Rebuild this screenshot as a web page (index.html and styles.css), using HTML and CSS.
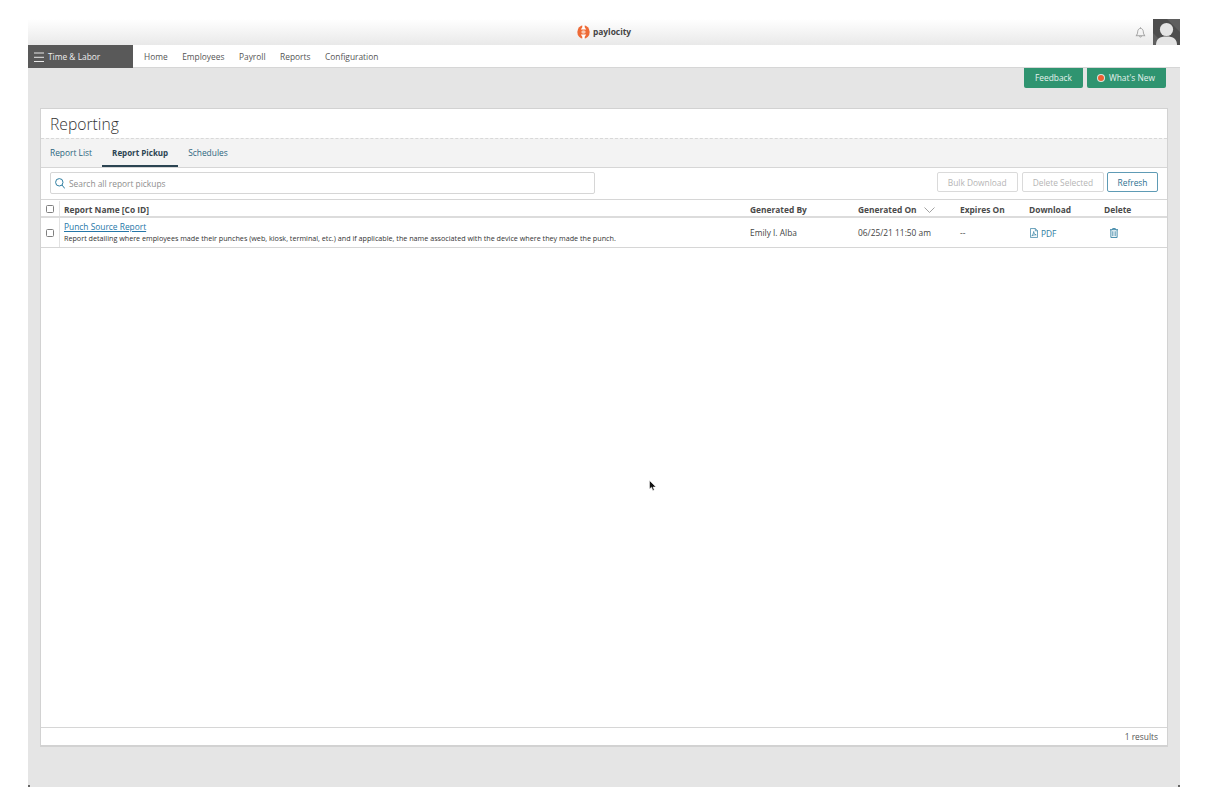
FILE: index.html
```html
<!DOCTYPE html>
<html lang="en">
<head>
<meta charset="utf-8">
<title>Reporting</title>
<link rel="stylesheet" href="styles.css">
</head>
<body>
<div class="window">
  <header class="topbar">
    <div class="logo">
      <svg class="logo-mark" width="13" height="14" viewBox="0 0 13 14"><ellipse cx="6.500" cy="7" rx="6.200" ry="6.800" fill="#ee6a36"/><path d="M5.300 0h2.400v2.200l1.500 2.300H3.800l1.500-2.300zM3.800 9.500h5.400l-1.500 2.300V14H5.300v-2.200z" fill="#fff"/><ellipse cx="6.500" cy="7" rx="2.200" ry="1.800" fill="#f9c9b2"/></svg>
      <span>paylocity</span>
    </div>
    <svg class="bell" width="11" height="11" viewBox="0 0 12 12"><path d="M1 9.500c1.400-1 1.700-2 1.900-4.200C3.100 2.900 4.300 1.500 6 1.500s2.900 1.400 3.100 3.800C9.300 7.500 9.600 8.500 11 9.500zM6 .3v1.200M4.800 10c.2 1.300 2.200 1.300 2.400 0" fill="none" stroke="#8a8a8a" stroke-width=".8"/></svg>
    <svg class="avatar" width="27" height="26" viewBox="0 0 27 26"><rect width="27" height="26" fill="#4d4d4d"/><path d="M14 0 27 13V0zM0 14 12 26H0z" fill="#5f5f5f"/><circle cx="13.500" cy="10.500" r="6.600" fill="#e4e4e4"/><path d="M3 26c0-6 3.500-8.500 10.500-8.500S24 20 24 26z" fill="#e4e4e4"/></svg>
  </header>
  <nav class="navbar">
    <div class="module">
      <svg width="10" height="10" viewBox="0 0 10 10"><path d="M0 1h10M0 5.300h10M0 9.500h10" stroke="#e8e8e8" stroke-width="1"/></svg>
      <span>Time &amp; Labor</span>
    </div>
    <ul class="menu">
      <li>Home</li><li>Employees</li><li>Payroll</li><li>Reports</li><li>Configuration</li>
    </ul>
  </nav>
  <main class="content">
    <div class="actions">
      <button class="green-btn">Feedback</button>
      <button class="green-btn"><i class="dot"></i>What's New</button>
    </div>
    <section class="panel">
      <h1 class="title">Reporting</h1>
      <div class="tabs">
        <a class="tab">Report List</a>
        <a class="tab active">Report Pickup</a>
        <a class="tab">Schedules</a>
      </div>
      <div class="toolbar">
        <div class="search">
          <svg width="10" height="11" viewBox="0 0 10 11"><circle cx="4.300" cy="4.300" r="3.700" fill="none" stroke="#2f7ea1" stroke-width="1"/><path d="m7 7 2.800 3.500" stroke="#2f7ea1" stroke-width="1"/></svg>
          <span>Search all report pickups</span>
        </div>
        <button class="btn disabled">Bulk Download</button>
        <button class="btn disabled">Delete Selected</button>
        <button class="btn primary">Refresh</button>
      </div>
      <div class="row head">
        <div class="check"><i class="box"></i></div>
        <div class="name">Report Name [Co ID]</div>
        <div class="by">Generated By</div>
        <div class="on">Generated On
          <svg class="sort" width="11" height="6" viewBox="0 0 11 6"><path d="m.5.500 5 5 5-5" fill="none" stroke="#8a8a8a" stroke-width=".8"/></svg>
        </div>
        <div class="exp">Expires On</div>
        <div class="dl">Download</div>
        <div class="del">Delete</div>
      </div>
      <div class="row item">
        <div class="check"><i class="box"></i></div>
        <div class="name">
          <a class="report-link">Punch Source Report</a>
          <p class="desc">Report detailing where employees made their punches (web, kiosk, terminal, etc.) and if applicable, the name associated with the device where they made the punch.</p>
        </div>
        <div class="by">Emily I. Alba</div>
        <div class="on">06/25/21 11:50 am</div>
        <div class="exp">--</div>
        <div class="dl link">
          <svg width="8" height="10" viewBox="0 0 9 11"><path d="M.5.500h5.500l2.500 2.500v7.500h-8zM6 .500v2.500h2.500M2 8.800c1-.8 2-3 2.200-5 .3 2 1 3.200 2.800 3.800-1.800-.2-3.600.2-5 1.200z" fill="none" stroke="#2f7ea1" stroke-width=".8"/></svg>
          <span class="pdf">PDF</span>
        </div>
        <div class="del">
          <svg width="8" height="10" viewBox="0 0 9 11"><path d="M0 1.800h9M3 1.800V.500h3v1.300M1 1.800v8.700h7V1.800" fill="none" stroke="#2f7ea1" stroke-width="1"/><path d="M3.200 3.500v5.500M5.800 3.500v5.500" stroke="#2f7ea1" stroke-width="1"/></svg>
        </div>
      </div>
      <div class="spacer"></div>
      <footer class="results">1 results</footer>
    </section>
  </main>
  <i class="corner corner-left"></i>
  <i class="corner corner-right"></i>
  <svg class="cursor" width="8" height="12" viewBox="0 0 8 12"><path d="M.500.500v8.500l2-1.800 1.300 3.300 1.500-.6L4 7h3z" fill="#111" stroke="#fff" stroke-width=".5"/></svg>
</div>
</body>
</html>
```
FILE: styles.css
```css
* { box-sizing: border-box; }
html, body { margin: 0; height: 100%; background: #fff; }
body {
  font-family: "Open Sans", "Liberation Sans", sans-serif;
  font-size: 8.400px;
  color: #3c3c3c;
  overflow: hidden;
}
.window {
  position: relative;
  width: 1152px;
  height: 768px;
  margin: 19px 28px 0;
  display: flex;
  flex-direction: column;
}
.topbar {
  height: 26px;
  background: linear-gradient(#fff, #e9e9e9);
  display: flex;
  align-items: center;
  justify-content: flex-end;
  position: relative;
}
.logo {
  position: absolute;
  left: 549px;
  top: 6px;
  display: flex;
  align-items: center;
  gap: 3px;
  font-weight: 700;
  font-size: 8.400px;
  line-height: 14px;
  color: #444;
}
.bell { margin-right: 7px; margin-top: 1px; }
.avatar { display: block; }
.navbar {
  height: 23px;
  background: #fff;
  display: flex;
  align-items: stretch;
}
.module {
  width: 105px;
  background: #595959;
  color: #eee;
  display: flex;
  align-items: center;
  gap: 4px;
  padding-left: 6px;
}
.menu {
  flex: 1;
  list-style: none;
  margin: 0;
  padding: 0 0 0 11px;
  display: flex;
  align-items: center;
  gap: 14.500px;
  color: #555;
  border-bottom: 1px solid #d6d6d6;
}
.content {
  flex: 1;
  background: #e5e5e5;
  padding: 0 12px 40px;
  display: flex;
  flex-direction: column;
  min-height: 0;
}
.actions {
  height: 40px;
  flex: none;
  display: flex;
  justify-content: flex-end;
  gap: 4px;
  padding-right: 2px;
  align-items: flex-start;
}
.green-btn {
  height: 19.500px;
  padding: 0 11px;
  border: 0;
  border-radius: 0 0 2px 2px;
  background: #2f9470;
  color: #e6f2ee;
  font: 8.400px "Open Sans", sans-serif;
  display: flex;
  align-items: center;
  gap: 5px;
}
.dot {
  width: 6px;
  height: 6px;
  border-radius: 50%;
  background: #ee5f33;
  box-shadow: 0 0 0 1px #d8e8e0;
}
.panel {
  flex: 1;
  background: #fff;
  border: 1px solid #d2d2d2;
  border-bottom-width: 2px;
  display: flex;
  flex-direction: column;
  min-height: 0;
}
.title {
  margin: 0;
  height: 29px;
  padding-left: 9px;
  font-weight: 300;
  font-size: 15.700px;
  line-height: 30px;
  color: #333;
  flex: none;
}
.tabs {
  height: 30px;
  flex: none;
  background: #f3f3f3;
  border-top: 1px dashed #d8d8d8;
  border-bottom: 1px solid #d6d6d6;
  display: flex;
  padding-left: 9px;
  gap: 20px;
  align-items: stretch;
}
.tab {
  line-height: 28px;
  color: #2d6680;
  position: relative;
}
.tab.active {
  font-weight: 700;
  font-size: 8px;
  color: #2b4452;
}
.tab.active::after {
  content: "";
  position: absolute;
  left: -10px;
  right: -10px;
  bottom: 0;
  height: 2px;
  background: #2b4452;
}
.toolbar {
  height: 32px;
  flex: none;
  display: flex;
  align-items: flex-start;
  gap: 4px;
  padding: 4px 9px 0;
  border-bottom: 1px solid #d6d6d6;
}
.search {
  width: 545px;
  height: 22px;
  border: 1px solid #d6d6d6;
  border-radius: 2px;
  display: flex;
  align-items: center;
  gap: 4px;
  padding-left: 4px;
  margin-right: auto;
  color: #8e8e8e;
}
.btn {
  height: 20px;
  padding: 0 9.500px;
  background: #fff;
  border-radius: 2px;
  font: 8.400px "Open Sans", sans-serif;
}
.btn.disabled { border: 1px solid #dadada; color: #b5b5b5; padding: 0 10px; }
.btn.primary { border: 1px solid #5f9bb5; color: #2d7191; margin-left: -1px; }
.row {
  display: grid;
  grid-template-columns: 19px 686px 108px 102px 69px 75px 1fr;
  flex: none;
  border-bottom: 1px solid #d6d6d6;
  align-items: center;
}
.row > div { padding-left: 4px; }
.row > .check {
  padding-left: 0;
  align-self: stretch;
  border-right: 1px solid #e2e2e2;
  display: flex;
  align-items: center;
  justify-content: center;
}
.box {
  width: 8px;
  height: 8px;
  border: 1px solid #808080;
  border-radius: 1.500px;
  background: #fff;
}
.head {
  height: 18px;
  padding-top: 1px;
  font-weight: 700;
  color: #4a4a4a;
  border-bottom-width: 2px;
  border-bottom-color: #dcdcdc;
}
.head > div:not(.check) { padding-top: 2px; }
.sort { margin-left: 5px; }
.item { height: 30px; color: #444; }
.item > .name { padding-bottom: 1px; }
.report-link {
  display: block;
  color: #2677a8;
  text-decoration: underline;
  line-height: 12px;
}
.desc {
  margin: 0;
  font-size: 7.200px;
  line-height: 10px;
  color: #333;
  white-space: nowrap;
}
.link { color: #2f7ea1; display: flex; align-items: center; gap: 3px; }
.link svg { margin-left: 1px; }
.pdf { padding-top: 1px; }
.row > .del svg { margin-left: 6px; display: block; }
.spacer { flex: 1; }
.results {
  height: 18px;
  flex: none;
  border-top: 1px solid #d6d6d6;
  text-align: right;
  padding-right: 9px;
  line-height: 17px;
  color: #555;
}
.corner {
  position: absolute;
  bottom: 0;
  width: 2px;
  height: 2px;
  background: #666;
}
.corner-left { left: 0; }
.corner-right { right: 0; }
.cursor { position: absolute; left: 621px; top: 461px; }
```
